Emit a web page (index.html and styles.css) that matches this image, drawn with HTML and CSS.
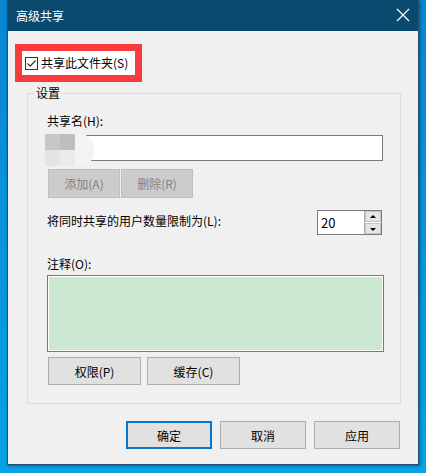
FILE: index.html
```html
<!DOCTYPE html>
<html lang="zh-CN">
<head>
    <meta charset="UTF-8">
    <meta name="viewport" content="width=device-width, initial-scale=1.0">
    <title>高级共享</title>
    <link rel="stylesheet" href="styles.css">
</head>
<body>
    <div class="window">
        <div class="titlebar">
            <span class="title">高级共享</span>
            <svg class="close" width="14" height="14" viewBox="0 0 14 14">
                <path d="M1 1 L13 13 M13 1 L1 13" stroke="#fff" stroke-width="1.2" fill="none"/>
            </svg>
        </div>
        <div class="content">
            <div class="highlight">
                <label class="check">
                    <span class="box">
                        <svg width="11" height="11" viewBox="0 0 11 11">
                            <path d="M1.5 5.5 L4.2 8.2 L9.5 2.5" stroke="#333" stroke-width="1.2" fill="none"/>
                        </svg>
                    </span>
                    共享此文件夹(S)
                </label>
            </div>

            <div class="group">
                <span class="group-title">设置</span>
                <div class="label first">共享名(H):</div>
                <div class="name-wrap">
                    <div class="field"></div>
                    <div class="blur">
                        <span class="c1"></span><span class="c2"></span><span class="c3"></span>
                        <span class="c4"></span><span class="c5"></span><span class="c6"></span>
                    </div>
                </div>
                <div class="row small-btns">
                    <button class="btn disabled">添加(A)</button>
                    <button class="btn disabled">删除(R)</button>
                </div>
                <div class="limit-row">
                    <span class="label">将同时共享的用户数量限制为(L):</span>
                    <div class="spin">
                        <span class="spin-value">20</span>
                        <div class="spin-btns">
                            <span class="arrow up"></span>
                            <span class="arrow down"></span>
                        </div>
                    </div>
                </div>
                <div class="label comment-label">注释(O):</div>
                <div class="comment"></div>
                <div class="row perm-btns">
                    <button class="btn wide">权限(P)</button>
                    <button class="btn wide">缓存(C)</button>
                </div>
            </div>

            <div class="footer">
                <button class="btn dialog default">确定</button>
                <button class="btn dialog">取消</button>
                <button class="btn dialog">应用</button>
            </div>
        </div>
    </div>
</body>
</html>
```

FILE: styles.css
```css
* {
    box-sizing: border-box;
}
body {
    margin: 0;
    height: 473px;
    overflow: hidden;
    font-family: "Noto Sans CJK SC", "Noto Sans", sans-serif;
    font-size: 12px;
    background: linear-gradient(to bottom, #0b86d3, #05a3e6);
}
.window {
    margin-left: 7px;
    width: 412px;
    height: 465px;
    background: #f0f0f0;
    border: 1px solid #1f4f74;
    border-top: none;
    box-shadow: 1px 1px 3px rgba(0, 30, 60, 0.5);
}
.titlebar {
    height: 31px;
    background: #0b4a6f;
    color: white;
    display: flex;
    align-items: center;
    justify-content: space-between;
    padding: 0 8px 1px 8px;
}
.title {
    font-size: 12px;
}
.content {
    padding: 13px 17px 0 7px;
}
.highlight {
    width: 127px;
    height: 38px;
    border: 7px solid #f93b3b;
    background: #fff;
    display: flex;
    align-items: center;
    padding-left: 3px;
}
.check {
    display: flex;
    align-items: center;
    gap: 3px;
    line-height: 16px;
    color: #000;
}
.check .box {
    width: 13px;
    height: 13px;
    border: 1px solid #333;
    background: #fff;
    display: flex;
    align-items: center;
    justify-content: center;
}
.group {
    position: relative;
    margin: 11px 0 0 12px;
    width: 374px;
    height: 311px;
    border: 1px solid #dcdcdc;
    padding: 0 16px 0 19px;
}
.group-title {
    position: absolute;
    top: -9px;
    left: 6px;
    padding: 0 2px;
    background: #f0f0f0;
    line-height: 16px;
}
.label {
    line-height: 16px;
    color: #000;
}
.label.first {
    margin-top: 19px;
}
.name-wrap {
    position: relative;
    margin-top: 6px;
}
.field {
    width: 335px;
    height: 26px;
    margin-left: 1px;
    background: #fff;
    border: 1px solid #7a7a7a;
}
.blur {
    position: absolute;
    left: -2px;
    top: -1px;
    width: 49px;
    height: 32px;
    display: grid;
    grid-template-columns: 15px 15px 19px;
    grid-template-rows: 16px 16px;
    border-radius: 0 14px 14px 0;
    overflow: hidden;
}
.c1 { background: #c8c7c7; }
.c2 { background: #bfbebf; }
.c3 { background: #f3f4f3; }
.c4 { background: #e4e4e4; }
.c5 { background: #ebebeb; }
.c6 { background: #f3f3f3; }
.row {
    display: flex;
}
.btn {
    font-family: inherit;
    font-size: 12px;
    height: 28px;
    padding: 0;
    background: #e1e1e1;
    border: 1px solid #adadad;
    color: #000;
}
.small-btns {
    margin-top: 8px;
    margin-left: 1px;
    gap: 1px;
}
.btn.disabled {
    width: 72px;
    height: 29px;
    background: #cccccc;
    border-color: #bfbfbf;
    color: #838383;
}
.limit-row {
    margin-top: 12px;
    display: flex;
    justify-content: space-between;
    align-items: flex-start;
    padding-right: 2px;
}
.limit-row .label {
    margin-top: 3px;
}
.spin {
    width: 65px;
    height: 25px;
    display: flex;
    border: 1px solid #7a7a7a;
    background: #fff;
}
.spin-value {
    flex: 1;
    padding: 3px 0 0 3px;
    font-size: 13px;
    line-height: 17px;
}
.spin-btns {
    width: 17px;
    display: flex;
    flex-direction: column;
    gap: 1px;
    background: #fff;
    border-left: 1px solid #adadad;
}
.arrow {
    flex: 1;
    background: #e5e5e5;
    border: 1px solid #c4c4c4;
    position: relative;
}
.arrow::after {
    content: "";
    position: absolute;
    left: 4px;
    top: 3px;
    border-left: 3px solid transparent;
    border-right: 3px solid transparent;
}
.arrow.up::after {
    border-bottom: 3px solid #000;
}
.arrow.down::after {
    top: 4px;
    border-top: 3px solid #000;
}
.comment-label {
    margin-top: 21px;
}
.comment {
    margin-top: 3px;
    width: 337px;
    height: 77px;
    border: 1px solid #7a7a7a;
    background: #cde8d0;
    box-shadow: inset 0 0 0 1px #fff;
}
.perm-btns {
    margin-top: 5px;
    margin-left: 1px;
    gap: 6px;
}
.btn.wide {
    width: 93px;
}
.footer {
    display: flex;
    justify-content: flex-end;
    gap: 8px;
    margin-top: 17px;
    padding-right: 1px;
}
.btn.dialog {
    width: 86px;
}
.btn.default {
    border: 2px solid #0078d7;
}
```
